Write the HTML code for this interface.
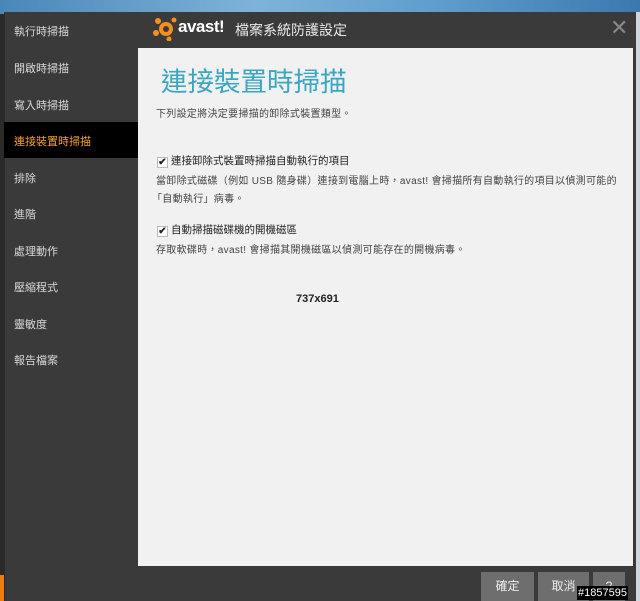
<!DOCTYPE html>
<html><head><meta charset="utf-8"><style>
*{margin:0;padding:0;box-sizing:border-box}
body{width:640px;height:601px;overflow:hidden;position:relative;background:#2e2e2e;font-family:"Liberation Sans","Noto Sans CJK TC",sans-serif}
.bg{position:absolute;left:0;top:0;width:640px;height:14px;background:linear-gradient(90deg,#4a86b8,#7fb3d8 40%,#5d9bcc 70%,#3d78ae)}
.edge{position:absolute;left:0;top:14px;width:5px;height:587px;background:#2a2a2a}
.win{position:absolute;left:4px;top:12px;width:632px;height:589px;background:#3a3a3a}
.rt{position:absolute;left:636px;top:12px;width:4px;height:589px;background:#cfd6dc}
.nav{position:absolute;left:14px;font-size:11px;color:#d8d8d8}
.act{position:absolute;left:4px;top:122px;width:134px;height:36px;background:#000}
.panel{position:absolute;left:138px;top:48px;width:495px;height:518px;background:#f1f1f1}
.title{position:absolute;left:235px;top:20px;font-size:14px;color:#e8e8e8}
.x{position:absolute;left:610px;top:17px;font-size:22px;color:#888;line-height:1}
.h1{position:absolute;left:161px;top:60px;font-size:26.5px;color:#3aa6c4}
.t{position:absolute;font-size:10px;color:#444;white-space:nowrap;letter-spacing:0.3px}
.cb{position:absolute;font-size:10.5px;color:#222;white-space:nowrap}
.cb b{display:inline-block;width:11px;height:11px;background:#fff;border:1px solid #bbb;font-size:10px;line-height:9px;text-align:center;margin-right:3px;vertical-align:-1px;color:#222}
.btn{position:absolute;top:572px;height:29px;background:#6e6e6e;color:#eee;font-size:12px;text-align:center;line-height:29px}
</style></head><body>
<div class="bg"></div>
<div class="win"></div>
<div class="edge"></div>
<div class="rt"></div>
<div style="position:absolute;left:0;top:575px;width:4px;height:26px;background:#f07c10"></div>
<div class="act"></div>
<div class="nav" style="top:23px">執行時掃描</div>
<div class="nav" style="top:60px">開啟時掃描</div>
<div class="nav" style="top:97px">寫入時掃描</div>
<div class="nav" style="top:133px;color:#f5a030">連接裝置時掃描</div>
<div class="nav" style="top:170px">排除</div>
<div class="nav" style="top:206px">進階</div>
<div class="nav" style="top:243px">處理動作</div>
<div class="nav" style="top:279px">壓縮程式</div>
<div class="nav" style="top:316px">靈敏度</div>
<div class="nav" style="top:352px">報告檔案</div>
<svg style="position:absolute;left:153px;top:17px" width="26" height="24" viewBox="0 0 26 24"><g fill="#f5901e"><circle cx="13" cy="12" r="7"/><circle cx="5" cy="4" r="3"/><circle cx="21" cy="3" r="2.5"/><circle cx="3" cy="16" r="3"/><circle cx="16" cy="22" r="2.5"/></g><circle cx="13" cy="12" r="3" fill="#3a3a3a"/></svg>
<div style="position:absolute;left:178px;top:17px;font-size:17px;font-weight:bold;color:#fff;font-family:'Liberation Sans',sans-serif;letter-spacing:-0.5px">avast!</div>
<div class="title">檔案系統防護設定</div>
<div class="x">✕</div>
<div class="panel"></div>
<div class="h1">連接裝置時掃描</div>
<div class="t" style="left:156px;top:105px">下列設定將決定要掃描的卸除式裝置類型。</div>
<div class="cb" style="left:157px;top:153px"><b>✔</b>連接卸除式裝置時掃描自動執行的項目</div>
<div class="t" style="left:156px;top:172px">當卸除式磁碟（例如 USB 隨身碟）連接到電腦上時，avast! 會掃描所有自動執行的項目以偵測可能的</div>
<div class="t" style="left:152px;top:190px">「自動執行」病毒。</div>
<div class="cb" style="left:157px;top:222px"><b>✔</b>自動掃描磁碟機的開機磁區</div>
<div class="t" style="left:156px;top:241px">存取軟碟時，avast! 會掃描其開機磁區以偵測可能存在的開機病毒。</div>
<div style="position:absolute;left:296px;top:293px;font-size:11px;font-weight:bold;color:#222">737x691</div>
<div class="btn" style="left:481px;width:53px">確定</div>
<div class="btn" style="left:538px;width:51px">取消</div>
<div class="btn" style="left:593px;width:32px">?</div>
<div style="position:absolute;left:577px;top:586px;font-size:11px;color:#fff;background:#000;padding:0 1px;line-height:14px">#1857595</div>
</body></html>
